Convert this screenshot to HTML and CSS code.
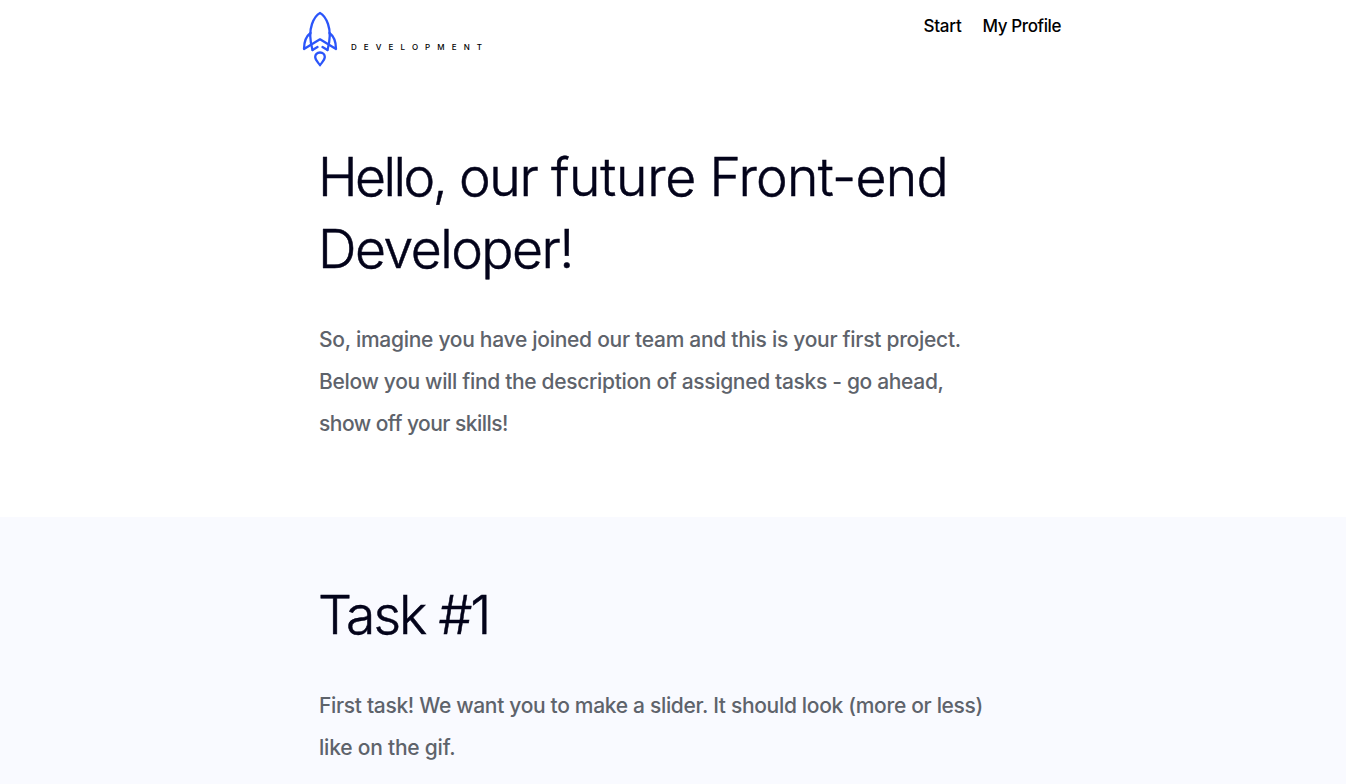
FILE: index.html
```html
<!DOCTYPE html>
<html lang="en"><head><meta charset="utf-8"><title>Development</title><link rel="stylesheet" href="styles.css"></head>
<body>
<header class="header">
<a class="logo"><svg class="rocket" viewBox="0 0 36 56" width="36" height="56"><path d="M10.500 39C7.800 29 7.500 20 10 13 12 7.500 15 3.500 18 2c3 1.500 6 5.500 8 11 2.500 7 2.200 16-.5 26"/><path d="M8.500 22C4.500 25 2 30 2 38l16-9.700L34 38c0-8-2.500-13-6.500-16"/><path d="M10.500 39l5-3M25.500 39l-5-3"/><path d="M18 41.500c-3 0-4.800 2-4.800 4.600 0 3 3 5.400 4.800 8.100 1.800-2.700 4.800-5.100 4.800-8.100 0-2.600-1.800-4.600-4.800-4.600z"/></svg><span class="brand">DEVELOPMENT</span></a>
<nav class="nav"><a>Start</a><a class="profile">My Profile</a></nav>
</header>
<section class="section intro"><h1 class="title"><span class="line t1"><span class="hello">Hello,</span> our <span class="future">future</span> <span class="front">Front-end</span></span><span class="line t2">Developer!</span></h1>
<p class="text"><span class="line p1">So, imagine you have joined our team and this is your first project.</span><span class="line p2">Below you will find the description of assigned tasks - go ahead,</span><span class="line p3">show off your skills!</span></p></section>
<section class="section task"><h2 class="title"><span class="line t3">Task #1</span></h2>
<p class="text"><span class="line p4">First task! We want you to make a slider. It should look (more or less)</span><span class="line p5">like on the gif.</span></p></section>
</body></html>
```
FILE: styles.css
```css
* { box-sizing: border-box; }
body { margin: 0; height: 784px; overflow: hidden; background: #fff; font-family: Inter, sans-serif; display: flex; flex-direction: column; }
.header { height: 141px; width: 759px; margin-left: 302px; display: flex; justify-content: space-between; flex: none; }
.logo { display: flex; padding-top: 11px; color: #000; }
.rocket { fill: none; stroke: #2b55fa; stroke-width: 2.3; stroke-linejoin: round; stroke-linecap: round; }
.brand { font-size: 8px; font-weight: 500; letter-spacing: 7.100px; margin: 30px 0 0 13px; line-height: 12px; }
.nav { display: flex; gap: 21px; padding-top: 14px; font-size: 17px; line-height: 25px; font-weight: 500; letter-spacing: -0.200px; }
.profile { letter-spacing: -0.400px; }
.section { padding-left: 319px; flex: none; }
.intro { height: 376px; }
.task { height: 267px; background: #f9faff; padding-top: 62px; }
.line { display: block; white-space: nowrap; width: max-content; }
.title { margin: 0 0 0 -1px; font-size: 53.500px; line-height: 72px; font-weight: 300; color: #03031a; -webkit-text-stroke: 0.500px #03031a; }
.text { margin: 34px 0 0; font-size: 21px; line-height: 42px; font-weight: 500; color: #5e636b; }
.t1 { letter-spacing: -1.400px; }
.hello { letter-spacing: -2.500px; }
.future { letter-spacing: -0.300px; }
.front { letter-spacing: -0.750px; }
.t2 { letter-spacing: -1.500px; }
.t3 { letter-spacing: -2px; }
.p1 { letter-spacing: -0.280px; }
.p2 { letter-spacing: -0.330px; }
.p3 { letter-spacing: -0.530px; }
.p4 { letter-spacing: -0.320px; }
.p5 { letter-spacing: -0.220px; }
```
